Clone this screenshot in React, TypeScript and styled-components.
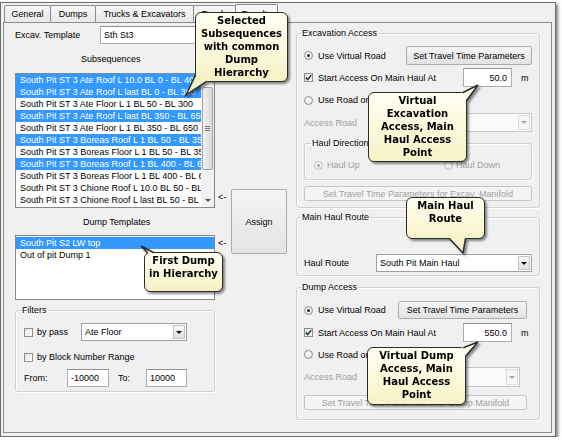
import React from "react";
import styled, { createGlobalStyle } from "styled-components";

const GlobalStyle = createGlobalStyle`
  html, body { margin: 0; padding: 0; background: #ffffff; }
  body { font-family: "Liberation Sans", Arial, sans-serif; font-size: 9px; color: #000; }
  *, *::before, *::after { box-sizing: border-box; }
`;

const Window = styled.div`
  position: relative;
  margin-top: 2px;
  width: 556px;
  height: 435px;
  background: #f0f0f0;
  border: 1px solid #6d6d6d;
  box-shadow: 2px 2px 3px rgba(0, 0, 0, 0.5);
  padding: 0 3px 3px 2px;
  display: flex;
  flex-direction: column;
`;

const TabStrip = styled.div`
  display: flex;
  align-items: flex-end;
  height: 19px;
  padding-left: 1px;
`;

const Tab = styled.div<{ $w: number; $active?: boolean }>`
  position: relative;
  z-index: ${(p) => (p.$active ? 2 : 1)};
  width: ${(p) => p.$w}px;
  height: ${(p) => (p.$active ? 19 : 17)}px;
  margin-right: -1px;
  margin-bottom: ${(p) => (p.$active ? -1 : 0)}px;
  border: 1px solid #898c95;
  border-bottom: none;
  border-radius: 2px 2px 0 0;
  background: ${(p) => (p.$active ? "#f7f7f7" : "linear-gradient(#f6f6f6, #e9e9e9)")};
  display: flex;
  align-items: center;
  justify-content: center;
  white-space: nowrap;
`;

const Panel = styled.div`
  flex: 1;
  border: 1px solid #898c95;
  background: #f0f0f0;
  display: flex;
  gap: 8px;
  padding: 3px 0 0 11px;
`;

const LeftCol = styled.div`
  width: 273px;
  display: grid;
  grid-template-columns: 200px 16px 57px;
  grid-template-rows: 18px 29px 135px 27px 65px auto;
  align-content: start;
`;

const RightCol = styled.div`
  width: 244px;
  margin-top: 1px;
  display: flex;
  flex-direction: column;
`;

const TemplateRow = styled.div`
  grid-column: 1 / -1;
  display: flex;
  align-items: center;
`;

const FieldLabel = styled.span<{ $w?: number; $disabled?: boolean }>`
  width: ${(p) => (p.$w ? `${p.$w}px` : "auto")};
  flex-shrink: 0;
  white-space: nowrap;
  color: ${(p) => (p.$disabled ? "#a0a0a0" : "#000")};
`;

const TextBox = styled.div<{ $w: number; $h: number; $right?: boolean }>`
  width: ${(p) => p.$w}px;
  height: ${(p) => p.$h}px;
  flex-shrink: 0;
  background: #fff;
  border: 1px solid #abadb3;
  border-top-color: #8e9096;
  display: flex;
  align-items: center;
  justify-content: ${(p) => (p.$right ? "flex-end" : "flex-start")};
  padding: 0 4px 0 3px;
  white-space: nowrap;
  overflow: hidden;
`;

const ColumnTitle = styled.div<{ $pl: number }>`
  grid-column: 1;
  align-self: center;
  line-height: 12px;
  padding-left: ${(p) => p.$pl}px;
`;

const ListBox = styled.div<{ $row: number; $pt: number }>`
  grid-column: 1;
  grid-row: ${(p) => p.$row};
  background: #fff;
  border: 1px solid #828790;
  display: flex;
  overflow: hidden;
  padding-top: ${(p) => p.$pt}px;
`;

const ListItems = styled.div`
  flex: 1;
  min-width: 0;
`;

const ListItem = styled.div<{ $sel?: boolean }>`
  height: 12px;
  line-height: 12px;
  padding-left: 4px;
  white-space: nowrap;
  overflow: hidden;
  background: ${(p) => (p.$sel ? "#3399ff" : "transparent")};
  color: ${(p) => (p.$sel ? "#fff" : "#000")};
`;

const ScrollBar = styled.div`
  width: 13px;
  flex-shrink: 0;
  background: #f1f1f1;
  display: flex;
  flex-direction: column;
`;

const ScrollArrow = styled.div<{ $up?: boolean }>`
  height: 13px;
  display: flex;
  align-items: center;
  justify-content: center;
  &::after {
    content: "";
    border-left: 3px solid transparent;
    border-right: 3px solid transparent;
    ${(p) => (p.$up ? "border-bottom: 3px solid #505050;" : "border-top: 3px solid #505050;")}
  }
`;

const Thumb = styled.div`
  height: 83px;
  margin: 0 1px;
  border: 1px solid #a3a3a3;
  border-radius: 2px;
  background: linear-gradient(90deg, #f2f2f2, #d9d9d9);
  display: flex;
  flex-direction: column;
  align-items: center;
  justify-content: center;
  gap: 1px;
`;

const Grip = styled.span`
  width: 5px;
  height: 1px;
  background: #777;
`;

const TrackSpace = styled.div`
  flex: 1;
`;

const ArrowMark = styled.div<{ $row: number; $end?: boolean; $m: number }>`
  grid-column: 2;
  grid-row: ${(p) => p.$row};
  align-self: ${(p) => (p.$end ? "end" : "start")};
  ${(p) => (p.$end ? `margin-bottom: ${p.$m}px;` : `margin-top: ${p.$m}px;`)}
  padding-left: 3px;
  line-height: 12px;
`;

const Button = styled.div<{ $w: number; $h: number; $disabled?: boolean; $mr?: number; $mt?: number }>`
  width: ${(p) => p.$w}px;
  height: ${(p) => p.$h}px;
  flex-shrink: 0;
  margin-top: ${(p) => p.$mt ?? 0}px;
  margin-right: ${(p) => p.$mr ?? 0}px;
  border: 1px solid ${(p) => (p.$disabled ? "#c6c6c6" : "#acacac")};
  border-radius: 2px;
  background: ${(p) => (p.$disabled ? "#f4f4f4" : "linear-gradient(#f5f5f5, #e3e3e3)")};
  color: ${(p) => (p.$disabled ? "#a0a0a0" : "#000")};
  display: flex;
  align-items: center;
  justify-content: center;
  white-space: nowrap;
`;

const AssignButton = styled(Button)`
  grid-column: 3;
  grid-row: 3 / 6;
  align-self: start;
  margin-top: 116px;
`;

const Field = styled.fieldset<{ $w: number; $pl?: number; $pb: number; $mt?: number }>`
  margin: ${(p) => p.$mt ?? 0}px 0 0 0;
  width: ${(p) => p.$w}px;
  min-width: 0;
  padding: 0 7px ${(p) => p.$pb}px ${(p) => p.$pl ?? 7}px;
  border: 1px solid #d0d0d0;
  border-radius: 3px;
  box-shadow: inset 1px 1px 0 #fff, 1px 1px 0 #fff;
  display: flex;
  flex-direction: column;
`;

const FilterField = styled(Field)`
  grid-column: 1;
  grid-row: 6;
  margin-top: 4px;
`;

const Legend = styled.legend<{ $disabled?: boolean }>`
  padding: 0 1px;
  margin-left: -3px;
  line-height: 12px;
  height: 12px;
  color: ${(p) => (p.$disabled ? "#000" : "#000")};
`;

const Row = styled.div<{ $h: number; $mt?: number }>`
  display: flex;
  align-items: center;
  height: ${(p) => p.$h}px;
  margin-top: ${(p) => p.$mt ?? 0}px;
`;

const Option = styled.div<{ $w?: number; $disabled?: boolean; $gap?: number }>`
  display: flex;
  align-items: center;
  gap: ${(p) => p.$gap ?? 5}px;
  width: ${(p) => (p.$w ? `${p.$w}px` : "auto")};
  flex-shrink: 0;
  white-space: nowrap;
  color: ${(p) => (p.$disabled ? "#a0a0a0" : "#000")};
`;

const Spacer = styled.div`
  flex: 1;
`;

const CheckBoxBox = styled.span`
  width: 9px;
  height: 9px;
  flex-shrink: 0;
  border: 1px solid #8e8f8f;
  background: linear-gradient(135deg, #e2e2e2, #ffffff);
  display: flex;
  align-items: center;
  justify-content: center;
`;

const RadioCircle = styled.span<{ $checked?: boolean; $disabled?: boolean }>`
  width: 9px;
  height: 9px;
  flex-shrink: 0;
  border-radius: 50%;
  border: 1px solid ${(p) => (p.$disabled ? "#c2c2c2" : "#8e8f8f")};
  background: radial-gradient(circle at 40% 35%, #ffffff, #dedede);
  display: flex;
  align-items: center;
  justify-content: center;
  &::after {
    content: "";
    display: ${(p) => (p.$checked ? "block" : "none")};
    width: 3px;
    height: 3px;
    border-radius: 50%;
    background: ${(p) => (p.$disabled ? "#a8a8a8" : "#2a2a2a")};
  }
`;

const Unit = styled.span`
  width: 20px;
  padding-left: 9px;
  flex-shrink: 0;
`;

const Combo = styled.div<{ $w: number; $h: number; $disabled?: boolean; $mr?: number; $ml?: string }>`
  width: ${(p) => p.$w}px;
  height: ${(p) => p.$h}px;
  flex-shrink: 0;
  margin-right: ${(p) => p.$mr ?? 0}px;
  margin-left: ${(p) => p.$ml ?? "0"};
  background: ${(p) => (p.$disabled ? "#fafafa" : "#fff")};
  border: 1px solid ${(p) => (p.$disabled ? "#c9c9c9" : "#9fa1a7")};
  display: flex;
  align-items: stretch;
  padding: 1px;
`;

const ComboText = styled.span`
  flex: 1;
  display: flex;
  align-items: center;
  padding-left: 2px;
  white-space: nowrap;
  overflow: hidden;
`;

const ComboButton = styled.span<{ $disabled?: boolean }>`
  width: 12px;
  flex-shrink: 0;
  border: 1px solid ${(p) => (p.$disabled ? "#dcdcdc" : "#c3c3c3")};
  background: ${(p) => (p.$disabled ? "#f6f6f6" : "linear-gradient(#f7f7f7, #e2e2e2)")};
  display: flex;
  align-items: center;
  justify-content: center;
  &::after {
    content: "";
    border-left: 3px solid transparent;
    border-right: 3px solid transparent;
    border-top: 3px solid ${(p) => (p.$disabled ? "#a8a8a8" : "#111")};
  }
`;

const CalloutBox = styled.div<{ $x: number; $y: number; $w: number; $h: number }>`
  position: absolute;
  z-index: 10;
  left: ${(p) => p.$x}px;
  top: ${(p) => p.$y}px;
  width: ${(p) => p.$w}px;
  height: ${(p) => p.$h}px;
  border: 1.5px solid #2b2b2b;
  border-radius: 6px;
  background: linear-gradient(#fffff2, #f6f2c6);
  filter: drop-shadow(2px 2px 1px rgba(0, 0, 0, 0.45));
  padding-top: 0.5px;
  text-align: center;
  font-family: "DejaVu Sans", Verdana, sans-serif;
  font-weight: bold;
  font-size: 10px;
  line-height: 13px;
  color: #000;
`;

const CalloutLine = styled.div`
  white-space: nowrap;
`;

const Tail = styled.svg`
  position: absolute;
  left: -1.5px;
  top: -1.5px;
  overflow: visible;
`;

type CalloutProps = {
  x: number;
  y: number;
  w: number;
  h: number;
  lines: string[];
  fill: string;
  fillPts: string;
  strokePts: string;
};

function Callout({ x, y, w, h, lines, fill, fillPts, strokePts }: CalloutProps) {
  return (
    <CalloutBox $x={x - 1} $y={y - 3} $w={w} $h={h}>
      {lines.map((l) => (
        <CalloutLine key={l}>{l}</CalloutLine>
      ))}
      <Tail width={w} height={h}>
        <polygon points={fillPts} fill={fill} />
        <polyline points={strokePts} fill="none" stroke="#2b2b2b" strokeWidth={1.5} strokeLinejoin="miter" />
      </Tail>
    </CalloutBox>
  );
}

function Check({ checked }: { checked?: boolean }) {
  return (
    <CheckBoxBox>
      {checked && (
        <svg width="7" height="7" viewBox="0 0 7 7">
          <path d="M0.8 3.4 L2.7 5.6 L6.3 1.1" fill="none" stroke="#2b2b2b" strokeWidth="1.5" />
        </svg>
      )}
    </CheckBoxBox>
  );
}

const subsequences: [string, boolean][] = [
  ["South Pit ST 3 Ate Roof L 10.0 BL 0 - BL 400", true],
  ["South Pit ST 3 Ate Roof L last BL 0 - BL 300", true],
  ["South Pit ST 3 Ate Floor L 1 BL 50 - BL 300", false],
  ["South Pit ST 3 Ate Roof L last BL 350 - BL 650", true],
  ["South Pit ST 3 Ate Floor L 1 BL 350 - BL 650", false],
  ["South Pit ST 3 Boreas Roof L 1 BL 50 - BL 350", true],
  ["South Pit ST 3 Boreas Floor L 1 BL 50 - BL 350", false],
  ["South Pit ST 3 Boreas Roof L 1 BL 400 - BL 650", true],
  ["South Pit ST 3 Boreas Floor L 1 BL 400 - BL 650", false],
  ["South Pit ST 3 Chione Roof L 10.0 BL 50 - BL 350", false],
  ["South Pit ST 3 Chione Roof L last BL 50 - BL 350", false],
];

const dumps: [string, boolean][] = [
  ["South Pit S2 LW top", true],
  ["Out of pit Dump 1", false],
];

export default function App() {
  return (
    <>
      <GlobalStyle />
      <Window>
        <TabStrip>
          <Tab $w={47}>General</Tab>
          <Tab $w={46}>Dumps</Tab>
          <Tab $w={99}>Trucks &amp; Excavators</Tab>
          <Tab $w={43}>Roads</Tab>
          <Tab $w={43} $active>
            Results
          </Tab>
        </TabStrip>
        <Panel>
          <LeftCol>
            <TemplateRow>
              <FieldLabel $w={85}>Excav. Template</FieldLabel>
              <TextBox $w={115} $h={18}>
                Sth St3
              </TextBox>
            </TemplateRow>
            <ColumnTitle $pl={66}>Subsequences</ColumnTitle>
            <ListBox $row={3} $pt={0}>
              <ListItems>
                {subsequences.map(([t, s]) => (
                  <ListItem key={t} $sel={s}>
                    {t}
                  </ListItem>
                ))}
              </ListItems>
              <ScrollBar>
                <ScrollArrow $up />
                <Thumb>
                  <Grip />
                  <Grip />
                  <Grip />
                </Thumb>
                <TrackSpace />
                <ScrollArrow />
              </ScrollBar>
            </ListBox>
            <ArrowMark $row={3} $end $m={5}>
              &lt;-
            </ArrowMark>
            <AssignButton $w={56} $h={65}>
              Assign
            </AssignButton>
            <ColumnTitle $pl={68}>Dump Templates</ColumnTitle>
            <ListBox $row={5} $pt={1}>
              <ListItems>
                {dumps.map(([t, s]) => (
                  <ListItem key={t} $sel={s}>
                    {t}
                  </ListItem>
                ))}
              </ListItems>
            </ListBox>
            <ArrowMark $row={5} $m={2}>
              &lt;-
            </ArrowMark>
            <FilterField $w={200} $pl={8} $pb={4}>
              <Legend>Filters</Legend>
              <Row $h={18} $mt={7}>
                <Option $w={57} $gap={4}>
                  <Check />
                  by pass
                </Option>
                <Combo $w={106} $h={18}>
                  <ComboText>Ate Floor</ComboText>
                  <ComboButton />
                </Combo>
              </Row>
              <Row $h={18} $mt={7}>
                <Option $gap={4}>
                  <Check />
                  by Block Number Range
                </Option>
              </Row>
              <Row $h={18} $mt={3}>
                <FieldLabel $w={43}>From:</FieldLabel>
                <TextBox $w={42} $h={18}>
                  -10000
                </TextBox>
                <FieldLabel $w={37} style={{ paddingLeft: 9 }}>
                  To:
                </FieldLabel>
                <TextBox $w={41} $h={18}>
                  10000
                </TextBox>
              </Row>
            </FilterField>
          </LeftCol>

          <RightCol>
            <Field $w={244} $pb={6}>
              <Legend>Excavation Access</Legend>
              <Row $h={19} $mt={7}>
                <Option>
                  <RadioCircle $checked />
                  Use Virtual Road
                </Option>
                <Spacer />
                <Button $w={126} $h={19}>
                  Set Travel Time Parameters
                </Button>
              </Row>
              <Row $h={19} $mt={3}>
                <Option>
                  <Check checked />
                  Start Access On Main Haul At
                </Option>
                <Spacer />
                <TextBox $w={49} $h={19} $right>
                  50.0
                </TextBox>
                <Unit>m</Unit>
              </Row>
              <Row $h={26}>
                <Option>
                  <RadioCircle />
                  Use Road on Ramp
                </Option>
              </Row>
              <Row $h={19}>
                <FieldLabel $disabled>Access Road</FieldLabel>
                <Spacer />
                <Combo $w={156} $h={19} $disabled>
                  <ComboText />
                  <ComboButton $disabled />
                </Combo>
              </Row>
              <Field $w={228} $pl={9} $pb={4} $mt={5}>
                <Legend>Haul Direction</Legend>
                <Row $h={20} $mt={6}>
                  <Option $w={130} $disabled $gap={4}>
                    <RadioCircle $checked $disabled />
                    Haul Up
                  </Option>
                  <Option $disabled $gap={3}>
                    <RadioCircle $disabled />
                    Haul Down
                  </Option>
                </Row>
              </Field>
              <Button $w={228} $h={15} $mt={6} $disabled>
                Set Travel Time Parameters for Excav. Manifold
              </Button>
            </Field>

            <Field $w={244} $pb={3} $mt={3}>
              <Legend>Main Haul Route</Legend>
              <Row $h={18} $mt={31}>
                <FieldLabel $w={72}>Haul Route</FieldLabel>
                <Combo $w={156} $h={18}>
                  <ComboText>South Pit Main Haul</ComboText>
                  <ComboButton />
                </Combo>
              </Row>
            </Field>

            <Field $w={244} $pb={9} $mt={5}>
              <Legend>Dump Access</Legend>
              <Row $h={18} $mt={8}>
                <Option>
                  <RadioCircle $checked />
                  Use Virtual Road
                </Option>
                <Spacer />
                <Button $w={129} $h={18} $mr={5}>
                  Set Travel Time Parameters
                </Button>
              </Row>
              <Row $h={19} $mt={4}>
                <Option>
                  <Check checked />
                  Start Access On Main Haul At
                </Option>
                <Spacer />
                <TextBox $w={49} $h={19} $right>
                  550.0
                </TextBox>
                <Unit>m</Unit>
              </Row>
              <Row $h={25}>
                <Option>
                  <RadioCircle />
                  Use Road on Ramp
                </Option>
              </Row>
              <Row $h={20}>
                <FieldLabel $disabled>Access Road</FieldLabel>
                <Spacer />
                <Combo $w={144} $h={20} $disabled $mr={12}>
                  <ComboText />
                  <ComboButton $disabled />
                </Combo>
              </Row>
              <Button $w={223} $h={15} $mt={8} $disabled>
                Set Travel Time Parameters for Dump Manifold
              </Button>
            </Field>
          </RightCol>
        </Panel>

        <Callout
          x={195}
          y={12}
          w={93}
          h={70}
          lines={["Selected", "Subsequences", "with common", "Dump", "Hierarchy"]}
          fill="#f6f2c7"
          fillPts="2,60 15,67 -9,83"
          strokePts="0.75,62.6 -9,83 11.6,69.25"
        />
        <Callout
          x={368}
          y={92}
          w={99}
          h={70}
          lines={["Virtual", "Excavation", "Access, Main", "Haul Access", "Point"]}
          fill="#fffff1"
          fillPts="88,4 96,12 110,-7"
          strokePts="94.5,0.75 110,-7 98.25,8.95"
        />
        <Callout
          x={406}
          y={197}
          w={79}
          h={42}
          lines={["Main Haul", "Route"]}
          fill="#f7f3cb"
          fillPts="40,38 60,38 57,56"
          strokePts="43.1,41.25 57,56 59.46,41.25"
        />
        <Callout
          x={144}
          y={252}
          w={79}
          h={40}
          lines={["First Dump", "in Hierarchy"]}
          fill="#fffff1"
          fillPts="7,4 16,4 -3,-6"
          strokePts="3.75,0.75 -3,-6 9.8,0.75"
        />
        <Callout
          x={367}
          y={347}
          w={99}
          h={58}
          lines={["Virtual Dump", "Access, Main", "Haul Access", "Point"]}
          fill="#fffff1"
          fillPts="88,4 96,12 111,-5"
          strokePts="96.3,0.75 111,-5 98.25,9.45"
        />
      </Window>
    </>
  );
}
